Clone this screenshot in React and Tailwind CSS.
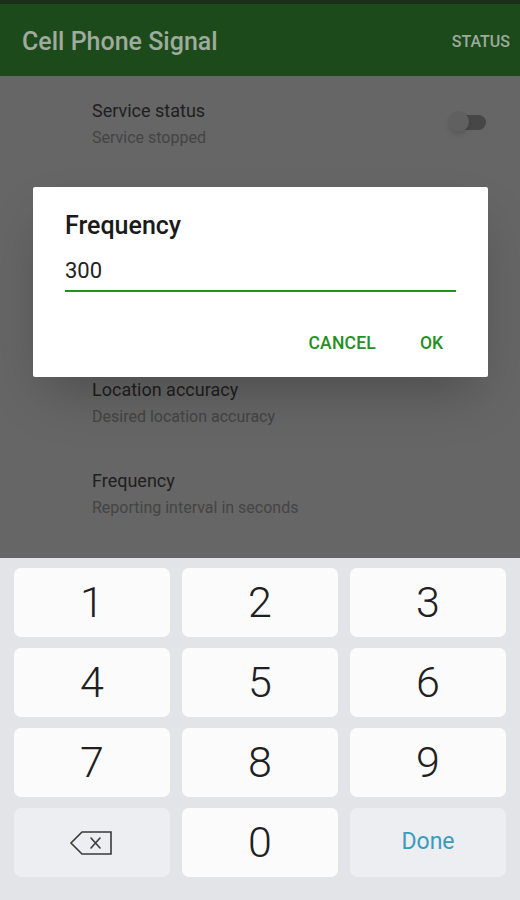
const settings = [
  { title: 'Service status', subtitle: 'Service stopped', toggle: true },
  { hidden: true },
  { hidden: true },
  { title: 'Location accuracy', subtitle: 'Desired location accuracy' },
  { title: 'Frequency', subtitle: 'Reporting interval in seconds' },
];

const keys = ['1', '2', '3', '4', '5', '6', '7', '8', '9'];

function BackspaceIcon() {
  return (
    <svg width="46" height="28" viewBox="0 0 46 28" fill="none" stroke="#3a3a3a" strokeWidth="1.6">
      <path d="M13 3 H42 V25 H13 L2 14 Z" strokeLinejoin="miter" />
      <path d="M22 9 L31 19 M31 9 L22 19" strokeLinecap="round" />
    </svg>
  );
}

export default function App() {
  return (
    <div
      className="relative w-[520px] h-[900px] flex flex-col overflow-hidden bg-[#666666]"
      style={{ fontFamily: 'Roboto, "Noto Sans", sans-serif' }}
    >
      {/* App bar (dimmed) */}
      <div className="h-[4px] shrink-0 bg-[#1a2e1a]" />
      <div className="h-[72px] shrink-0 bg-[#1c4a1b] flex items-center justify-between pl-[22px] pr-[10px]">
        <span className="text-[25px] font-medium text-[#9eab9d] pt-[4px]">Cell Phone Signal</span>
        <span className="text-[16px] font-medium text-[#9eab9d] pt-[4px]">STATUS</span>
      </div>

      {/* Settings list */}
      <div className="flex-1 min-h-0 overflow-hidden flex flex-col pt-[23px]">
        {settings.map((item, i) => (
          <div
            key={i}
            className={`${i === 3 ? 'h-[91px]' : 'h-[93px]'} shrink-0 pl-[92px] pr-[32px] flex justify-between`}
          >
            {!item.hidden && (
              <div className="flex flex-col gap-[3px]">
                <span className="text-[18px] leading-[24px] text-[#1e1e1e]">{item.title}</span>
                <span className="text-[16px] leading-[24px] text-[#444444]">{item.subtitle}</span>
              </div>
            )}
            {item.toggle && (
              <div className="relative w-[40px] h-[24px] mt-[12px]">
                <div className="absolute left-[8px] right-[2px] top-[4px] h-[15px] rounded-full bg-[#474747]" />
                <div className="absolute left-0 top-0 w-[21px] h-[21px] rounded-full bg-[#606060] shadow-md" />
              </div>
            )}
          </div>
        ))}
      </div>

      {/* Numeric keyboard */}
      <div className="h-[342px] shrink-0 bg-[#e2e4e7] px-[14px] pt-[10px] grid grid-cols-3 gap-x-[12px] gap-y-[11px] auto-rows-[69px] content-start">
        {keys.map((k) => (
          <div
            key={k}
            className="bg-[#fbfbfb] rounded-[7px] flex items-center justify-center text-[43px] font-light text-[#202020]"
          >
            {k}
          </div>
        ))}
        <div className="bg-[#eceef1] rounded-[7px] flex items-center justify-center">
          <BackspaceIcon />
        </div>
        <div className="bg-[#fbfbfb] rounded-[7px] flex items-center justify-center text-[43px] font-light text-[#202020]">
          0
        </div>
        <div className="bg-[#eceef1] rounded-[7px] flex items-center justify-center text-[23px] text-[#3a9bbf]">
          Done
        </div>
      </div>

      {/* Dialog */}
      <div className="absolute left-[33px] top-[187px] w-[455px] h-[190px] bg-white rounded-[2px] shadow-2xl px-[32px] pt-[23px]">
        <div className="text-[25px] font-medium text-[#1a1a1a] leading-[32px]">Frequency</div>
        <div className="mt-[15px] text-[22px] text-[#222] leading-[28px]">300</div>
        <div className="mt-[5px] h-[2px] bg-[#23901f]" />
        <div className="flex justify-end gap-[44px] mt-[38px] pr-[13px]">
          <span className="text-[17.5px] font-medium text-[#23901f] tracking-[0.2px]">CANCEL</span>
          <span className="text-[17.5px] font-medium text-[#23901f]">OK</span>
        </div>
      </div>
    </div>
  );
}
